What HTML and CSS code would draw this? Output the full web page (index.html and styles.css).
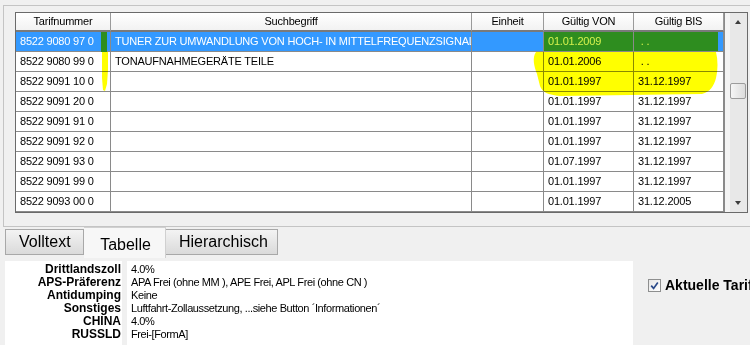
FILE: index.html
```html
<!DOCTYPE html>
<html lang="de">
<head>
  <meta charset="UTF-8">
  <title>Tarifauskunft</title>
  <link rel="stylesheet" href="styles.css">
</head>
<body>
  <!-- Trefferliste -->
  <div class="group">
    <div class="grid">
      <div class="rows">
        <div class="row head">
          <div class="cell">Tarifnummer</div>
          <div class="cell">Suchbegriff</div>
          <div class="cell">Einheit</div>
          <div class="cell">Gültig VON</div>
          <div class="cell">Gültig BIS</div>
        </div>
        <div class="row selected">
          <div class="cell">8522 9080 97 0</div>
          <div class="cell">TUNER ZUR UMWANDLUNG VON HOCH- IN MITTELFREQUENZSIGNALE</div>
          <div class="cell"></div>
          <div class="cell marked">01.01.2009</div>
          <div class="cell marked">&nbsp;. .</div>
        </div>
        <div class="row">
          <div class="cell">8522 9080 99 0</div>
          <div class="cell">TONAUFNAHMEGERÄTE TEILE</div>
          <div class="cell"></div>
          <div class="cell">01.01.2006</div>
          <div class="cell">&nbsp;. .</div>
        </div>
        <div class="row">
          <div class="cell">8522 9091 10 0</div>
          <div class="cell"></div>
          <div class="cell"></div>
          <div class="cell">01.01.1997</div>
          <div class="cell">31.12.1997</div>
        </div>
        <div class="row">
          <div class="cell">8522 9091 20 0</div>
          <div class="cell"></div>
          <div class="cell"></div>
          <div class="cell">01.01.1997</div>
          <div class="cell">31.12.1997</div>
        </div>
        <div class="row">
          <div class="cell">8522 9091 91 0</div>
          <div class="cell"></div>
          <div class="cell"></div>
          <div class="cell">01.01.1997</div>
          <div class="cell">31.12.1997</div>
        </div>
        <div class="row">
          <div class="cell">8522 9091 92 0</div>
          <div class="cell"></div>
          <div class="cell"></div>
          <div class="cell">01.01.1997</div>
          <div class="cell">31.12.1997</div>
        </div>
        <div class="row">
          <div class="cell">8522 9091 93 0</div>
          <div class="cell"></div>
          <div class="cell"></div>
          <div class="cell">01.07.1997</div>
          <div class="cell">31.12.1997</div>
        </div>
        <div class="row">
          <div class="cell">8522 9091 99 0</div>
          <div class="cell"></div>
          <div class="cell"></div>
          <div class="cell">01.01.1997</div>
          <div class="cell">31.12.1997</div>
        </div>
        <div class="row">
          <div class="cell">8522 9093 00 0</div>
          <div class="cell"></div>
          <div class="cell"></div>
          <div class="cell">01.01.1997</div>
          <div class="cell">31.12.2005</div>
        </div>
      </div>
      <div class="scrollbar">
        <div class="arrow up"></div>
        <div class="track"><div class="thumb"></div></div>
        <div class="arrow down"></div>
      </div>
    </div>
  </div>

  <!-- Reiter -->
  <div class="tabs">
    <div class="tab">Volltext</div>
    <div class="tab active">Tabelle</div>
    <div class="tab">Hierarchisch</div>
  </div>

  <!-- Details -->
  <div class="details">
    <div class="labels">
      <div>Drittlandszoll</div>
      <div>APS-Präferenz</div>
      <div>Antidumping</div>
      <div>Sonstiges</div>
      <div>CHINA</div>
      <div>RUSSLD</div>
    </div>
    <div class="values">
      <div>4.0%</div>
      <div>APA Frei (ohne MM ), APE Frei, APL Frei (ohne CN )</div>
      <div>Keine</div>
      <div>Luftfahrt-Zollaussetzung, ...siehe Button ´Informationen´</div>
      <div>4.0%</div>
      <div>Frei-[FormA]</div>
    </div>
    <label class="current">
      <span class="box">
        <svg viewBox="0 0 11 11"><path d="M2.2 5.6 L4.6 8.4 L8.8 2.6" fill="none" stroke="#2a4a8a" stroke-width="1.7"/></svg>
      </span>
      Aktuelle Tarife
    </label>
  </div>

  <!-- Textmarker über der Liste -->
  <svg class="marker-green" width="750" height="345">
    <rect x="101" y="32" width="6" height="20" fill="#2e8d1f"/>
  </svg>
  <svg class="marker-yellow" width="750" height="345">
    <path d="M102 52 L108 52 L108 70 L107 84 L105 91 L103 90 L102 78 Z" fill="#ffff00"/>
    <path d="M536 52 L716 52 C718 60 718 70 716 78 C714 86 710 92 702 94 L560 96 C548 95 542 92 540 86 L537 74 C534 66 532 58 536 52 Z" fill="#ffff00"/>
  </svg>
</body>
</html>
```
FILE: styles.css
```css
body {
  margin: 0;
  width: 750px;
  height: 345px;
  overflow: hidden;
  position: relative;
  background: #f0f0f0;
  font-family: "Liberation Sans", Arial, sans-serif;
  font-size: 11px;
  color: #000;
}
.group {
  margin: 5px 0 0 3px;
  height: 222px;
  box-sizing: border-box;
  border: 1px solid #c4c4c4;
  border-right: none;
  padding: 6px 0 0 11px;
}
.grid {
  display: flex;
  width: 733px;
  border: 1px solid #6a6a6a;
  box-sizing: border-box;
  background: #fff;
}
.rows {
  width: 708px;
}
.row {
  display: grid;
  grid-template-columns: 95px 361px 72px 90px 90px;
  height: 20px;
}
.cell {
  box-sizing: border-box;
  border-right: 1px solid #8a8a8a;
  border-bottom: 1px solid #8a8a8a;
  padding: 0 4px;
  line-height: 19px;
  white-space: nowrap;
  overflow: hidden;
  letter-spacing: -0.2px;
}
.head {
  height: 19px;
}
.head .cell {
  text-align: center;
  line-height: 17px;
  background: linear-gradient(#ffffff, #f2f2f2);
  border-right: 1px solid #9a9a9a;
  border-bottom: 2px solid #7a7a7a;
}
.selected .cell {
  background: #3399ff;
  color: #fff;
}
.selected .cell.marked {
  background: #2e8d1f;
  color: #d6f24e;
}
.selected .cell:last-child.marked {
  background: linear-gradient(90deg, #2e8d1f 84px, #3399ff 84px);
}
.scrollbar {
  flex: 1;
  display: flex;
  flex-direction: column;
  border-left: 1px solid #8a8a8a;
  padding-left: 5px;
  background: linear-gradient(90deg, #f4f4f4 5px, #e8e8e8 5px);
}
.arrow {
  height: 17px;
  position: relative;
}
.arrow::after {
  content: "";
  position: absolute;
  left: 5px;
  border-left: 3.5px solid transparent;
  border-right: 3.5px solid transparent;
}
.arrow.up::after {
  top: 7px;
  border-bottom: 4px solid #3c3c3c;
}
.arrow.down::after {
  top: 6px;
  border-top: 4px solid #3c3c3c;
}
.track {
  flex: 1;
}
.thumb {
  margin-top: 53px;
  width: 14px;
  height: 14px;
  border: 1px solid #9c9c9c;
  border-radius: 2px;
  background: linear-gradient(90deg, #f6f6f6, #dcdcdc);
}
.tabs {
  display: flex;
  align-items: flex-start;
  height: 31px;
  margin: 0 0 0 5px;
}
.tab {
  box-sizing: border-box;
  height: 26px;
  margin-top: 2px;
  padding: 0 11px 0 13px;
  line-height: 24px;
  font-size: 16px;
  border: 1px solid #a8a8a8;
  background: linear-gradient(#f3f3f3, #dadada);
}
.tab + .tab {
  border-left: none;
}
.tab:first-child {
  width: 79px;
}
.tab.active {
  width: 82px;
  height: 31px;
  margin-top: 0;
  padding-top: 4px;
  line-height: 26px;
  text-align: center;
  background: #f7f7f7;
  border-bottom: none;
  border-color: #d0d0d0;
}
.tab:last-child {
  width: 112px;
}
.details {
  display: flex;
  margin-top: 3px;
  height: 90px;
}
.labels {
  flex: none;
  width: 117px;
  margin-left: 5px;
  background: #fff;
  text-align: right;
  font-weight: bold;
  font-size: 12px;
  line-height: 13px;
  padding: 2px 1px 0 0;
  box-sizing: border-box;
}
.values {
  flex: none;
  width: 506px;
  margin-left: 5px;
  background: #fff;
  line-height: 13px;
  padding: 2px 0 0 4px;
  box-sizing: border-box;
  letter-spacing: -0.4px;
}
.current {
  flex: none;
  display: flex;
  align-items: center;
  gap: 4px;
  margin: 17px 0 0 15px;
  height: 14px;
  white-space: nowrap;
  font-weight: bold;
  font-size: 14px;
}
.box {
  width: 11px;
  height: 11px;
  border: 1px solid #8e8f8f;
  background: linear-gradient(135deg, #e6e6e6, #ffffff);
  display: flex;
}
.box svg {
  width: 11px;
  height: 11px;
}
.marker-green,
.marker-yellow {
  position: absolute;
  left: 0;
  top: 0;
  pointer-events: none;
}
.marker-yellow {
  mix-blend-mode: multiply;
}
```
